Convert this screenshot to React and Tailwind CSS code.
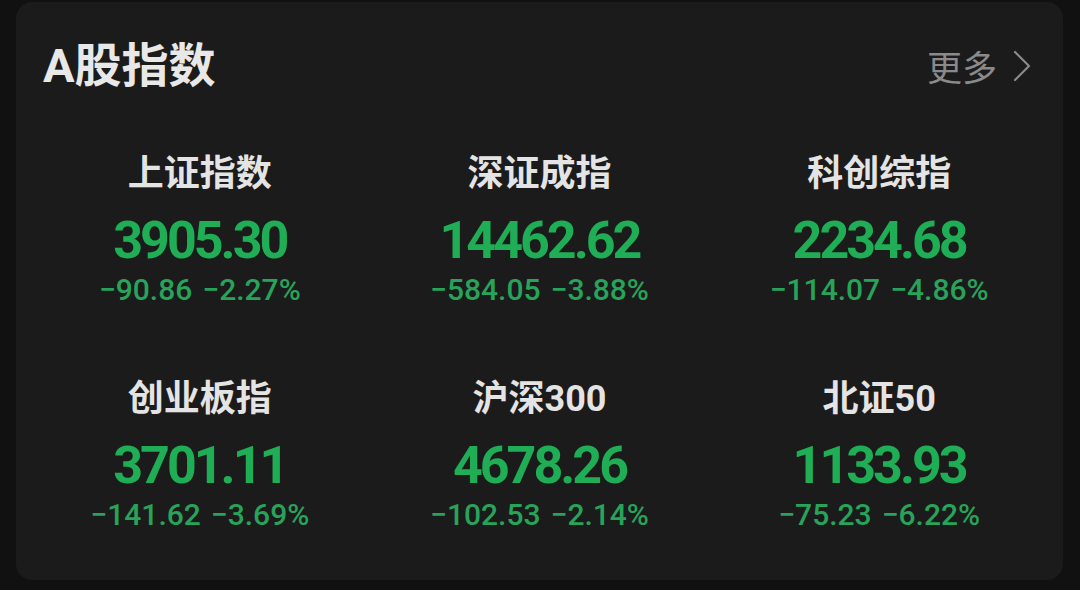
import React from 'react';

const indices = [
  { name: '上证指数', value: '3905.30', change: '−90.86', pct: '−2.27%' },
  { name: '深证成指', value: '14462.62', change: '−584.05', pct: '−3.88%' },
  { name: '科创综指', value: '2234.68', change: '−114.07', pct: '−4.86%' },
  { name: '创业板指', value: '3701.11', change: '−141.62', pct: '−3.69%' },
  { name: '沪深300', value: '4678.26', change: '−102.53', pct: '−2.14%' },
  { name: '北证50', value: '1133.93', change: '−75.23', pct: '−6.22%' },
];

function IndexCell({ item }) {
  return (
    <div className="flex flex-col items-center">
      <div className="h-[38px] text-[36px] leading-[38px] font-bold text-[#e4e4e4] [font-family:Roboto,'Noto_Sans_CJK_SC',sans-serif]">
        {item.name}
      </div>
      <div className="mt-[26px] h-[44px] text-[52px] leading-[44px] font-bold tracking-[-3px] text-[#1fae55] [font-family:Roboto,sans-serif]">
        {item.value}
      </div>
      <div className="mt-[12px] flex gap-[10px] h-[30px] text-[30px] leading-[30px] font-medium text-[#27a35a] [font-family:Roboto,sans-serif]">
        <span>{item.change}</span>
        <span>{item.pct}</span>
      </div>
    </div>
  );
}

export default function App() {
  return (
    <div className="w-[1080px] h-[590px] bg-[#111111] pt-[2px] pl-[16px] pr-[17px] pb-[10px]">
      <div className="h-full rounded-[16px] bg-[#1b1b1b]">
        <div className="flex items-center justify-between pl-[27px] pr-[32px] pt-[38px]">
          <h1 className="text-[47px] leading-[52px] font-bold text-[#e8e8e8] [font-family:Roboto,'Noto_Sans_CJK_SC',sans-serif]">
            A股指数
          </h1>
          <div className="flex items-center gap-[16px] text-[35px] leading-[40px] text-[#8a8a8a] [font-family:'Noto_Sans_CJK_SC',sans-serif]">
            <span>更多</span>
            <svg width="18" height="32" viewBox="0 0 18 32" fill="none">
              <path d="M2 2 L16 16 L2 30" stroke="#8a8a8a" strokeWidth="2.2" strokeLinecap="round" strokeLinejoin="round" />
            </svg>
          </div>
        </div>
        <div className="grid grid-cols-3 gap-y-[75px] px-[14px] mt-[63px]">
          {indices.map((item) => (
            <IndexCell key={item.name} item={item} />
          ))}
        </div>
      </div>
    </div>
  );
}
